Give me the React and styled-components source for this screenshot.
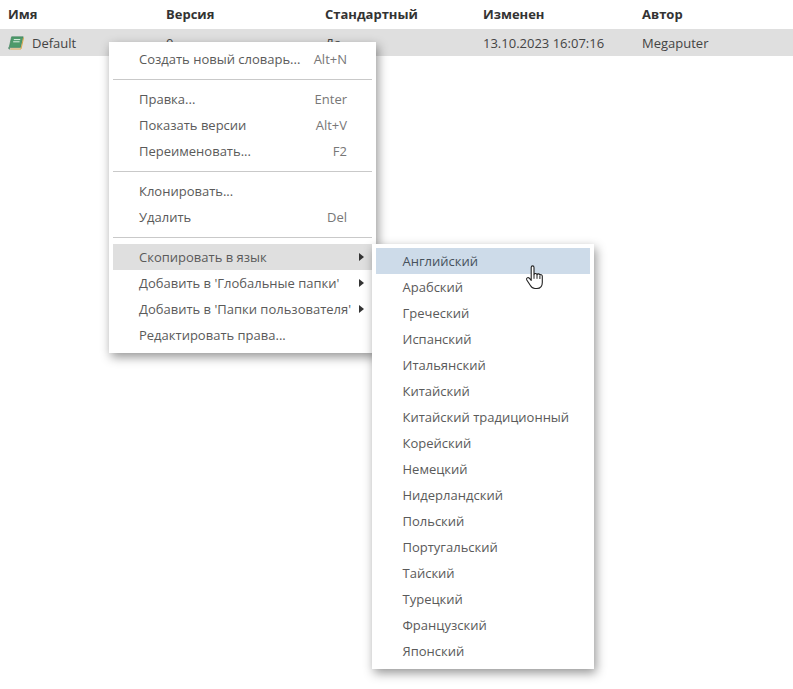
import React from "react";
import styled, { createGlobalStyle } from "styled-components";

const Global = createGlobalStyle`
  html, body { margin: 0; padding: 0; background: #fff; overflow: hidden; }
  body { font-family: "Open Sans", "Liberation Sans", sans-serif; font-size: 13px; color: #4a4a4a; }
`;
const Page = styled.div`position: relative; width: 793px; height: 689px; overflow: hidden;`;
const Row = styled.div`
  display: grid;
  grid-template-columns: 166px 159px 158px 159px 151px;
  height: ${p => p.$h}px;
  align-items: center;
  box-sizing: border-box;
  background: ${p => p.$bg || "transparent"};
  margin-bottom: ${p => p.$mb || 0}px;
`;
const HeadCell = styled.div`padding-left: ${p => p.$first ? 8 : 0}px; font-weight: 700; color: #333;`;
const Cell = styled.div`padding-left: ${p => p.$first ? 8 : 0}px; color: #444; display: flex; align-items: center; gap: 8px;`;
const Menu = styled.div`
  position: absolute;
  left: ${p => p.$x}px;
  top: ${p => p.$y}px;
  width: ${p => p.$w}px;
  box-sizing: border-box;
  padding: 4px 4px 5px;
  background: #fff;
  z-index: ${p => p.$z};
  box-shadow: 2px 4px 10px rgba(0,0,0,.42);
`;
const Item = styled.div`
  height: 26px;
  display: flex;
  align-items: center;
  justify-content: space-between;
  padding: 0 ${p => p.$pr ?? 24}px 0 26px;
  background: ${p => p.$bg || "transparent"};
  color: #5a5a5a;
  white-space: nowrap;
`;
const SubItem = styled(Item)`
  padding-left: 26.5px;
  color: ${p => p.$active ? "#46515c" : "#5a5a5a"};
`;
const Hint = styled.span`color: #777; margin-right: 1px;`;
const Sep = styled.div`height: 1px; margin: 7px 0 6px; background: #c9c9c9; `;
const Arrow = styled.span`
  width: 0; height: 0;
  border-left: 5px solid #333;
  border-top: 4px solid transparent;
  border-bottom: 4px solid transparent;
`;
const Cursor = styled.svg`position: absolute; left: 525px; top: 265px; z-index: 5;`;

const Book = () => (
  <svg width="16" height="14" viewBox="0 0 16 14">
    <path d="M3.6.8h11.6l-2.6 10.6H1.2z" fill="#4d9a6a" stroke="#3b7d58" strokeWidth=".6" />
    <path d="M15.6 1.6 13 13H2.4" fill="none" stroke="#d8a94e" strokeWidth="1" />
    <path d="M1.2 11.4c-.6.9-.3 1.6.9 1.6" fill="none" stroke="#3b7d58" strokeWidth="1.1" />
    <path d="M5.8 3.6h6.4M5.2 5.8h6.4" stroke="#dff0e5" strokeWidth="1" />
  </svg>
);

const langs = ["Английский","Арабский","Греческий","Испанский","Итальянский","Китайский","Китайский традиционный","Корейский","Немецкий","Нидерландский","Польский","Португальский","Тайский","Турецкий","Французский","Японский"];

export default function App() {
  return (
    <Page>
      <Global />
      <Row $h={28} $mb={1}>
        <HeadCell $first>Имя</HeadCell>
        <HeadCell>Версия</HeadCell>
        <HeadCell>Стандартный</HeadCell>
        <HeadCell>Изменен</HeadCell>
        <HeadCell>Автор</HeadCell>
      </Row>
      <Row $h={27} $bg="#dfdfdf">
        <Cell $first><Book />Default</Cell>
        <Cell>0</Cell>
        <Cell>Да</Cell>
        <Cell>13.10.2023 16:07:16</Cell>
        <Cell>Megaputer</Cell>
      </Row>
      <Menu $x={109} $y={42} $w={267} $z={2}>
        <Item><span>Создать новый словарь...</span><Hint>Alt+N</Hint></Item>
        <Sep />
        <Item><span>Правка...</span><Hint>Enter</Hint></Item>
        <Item><span>Показать версии</span><Hint>Alt+V</Hint></Item>
        <Item><span>Переименовать...</span><Hint>F2</Hint></Item>
        <Sep />
        <Item><span>Клонировать...</span></Item>
        <Item><span>Удалить</span><Hint>Del</Hint></Item>
        <Sep />
        <Item $bg="#dfdfdf" $pr={8}><span>Скопировать в язык</span><Arrow /></Item>
        <Item $pr={8}><span>Добавить в 'Глобальные папки'</span><Arrow /></Item>
        <Item $pr={8}><span>Добавить в 'Папки пользователя'</span><Arrow /></Item>
        <Item><span>Редактировать права...</span></Item>
      </Menu>
      <Menu $x={372} $y={244} $w={222} $z={3}>
        {langs.map((l, i) => (
          <SubItem key={l} $active={i === 0} $bg={i === 0 ? "#cddbe9" : undefined}>{l}</SubItem>
        ))}
      </Menu>
      <Cursor width="20" height="26" viewBox="0 0 20 26">
        <path d="M6.2 2.4c0-2 2.8-2 2.8 0v7.2c.4-1.5 2.8-1.4 3 .2.4-1.4 2.7-1.2 2.9.5.5-1 2.4-.8 2.4 1v6.2c0 3.6-2 6-5.4 6H10c-2.2 0-3.4-1-4.6-3L1.8 15c-1-1.8 1.2-3.2 2.5-1.8l1.9 2.2z" fill="#fff" stroke="#222" strokeWidth="1.1" strokeLinejoin="round" />
        <path d="M9 9.6v4.2M12 9.8v4M14.9 11v3" stroke="#222" strokeWidth="1" fill="none" />
      </Cursor>
    </Page>
  );
}
